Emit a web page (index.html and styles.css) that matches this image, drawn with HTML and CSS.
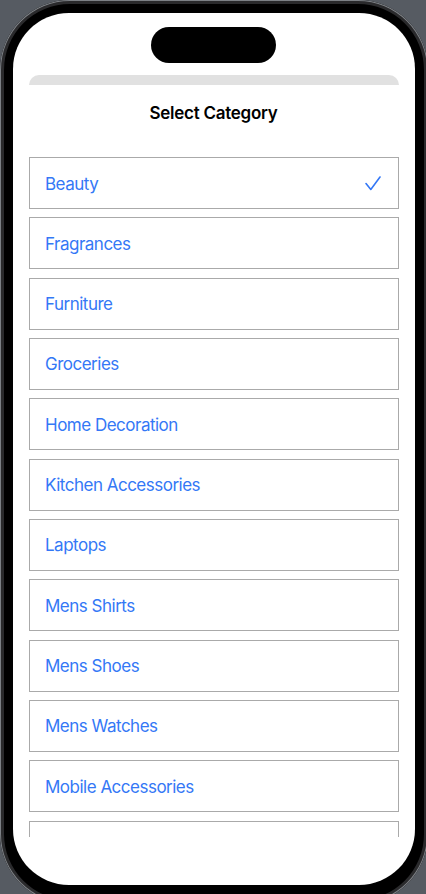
FILE: index.html
```html
<!DOCTYPE html>
<html lang="en">
<head>
<meta charset="utf-8">
<title>Select Category</title>
<link rel="stylesheet" href="styles.css">
</head>
<body>
<div class="phone">
  <div class="screen">
    <div class="island"></div>
    <div class="sheet-edge"></div>
    <h1 class="title">Select Category</h1>
    <div class="list">
      <div class="row selected"><span class="label">Beauty</span>
        <svg class="check" width="16" height="15" viewBox="0 0 16 15"><path d="M1 7.5 L5.8 13.5 L15 1" fill="none" stroke="#3478f6" stroke-width="1.6" stroke-linecap="round" stroke-linejoin="round"/></svg>
      </div>
      <div class="row"><span class="label">Fragrances</span></div>
      <div class="row"><span class="label">Furniture</span></div>
      <div class="row"><span class="label">Groceries</span></div>
      <div class="row"><span class="label">Home Decoration</span></div>
      <div class="row"><span class="label">Kitchen Accessories</span></div>
      <div class="row"><span class="label">Laptops</span></div>
      <div class="row"><span class="label">Mens Shirts</span></div>
      <div class="row"><span class="label">Mens Shoes</span></div>
      <div class="row"><span class="label">Mens Watches</span></div>
      <div class="row"><span class="label">Mobile Accessories</span></div>
      <div class="row"></div>
    </div>
  </div>
</div>
</body>
</html>
```
FILE: styles.css
```css
* { box-sizing: border-box; }
html, body { margin: 0; padding: 0; }
body {
  background: #565b62;
  width: 426px;
  height: 894px;
  overflow: hidden;
  font-family: Inter, "Noto Sans", "Liberation Sans", sans-serif;
}
.phone {
  width: 428px;
  height: 904px;
  border-radius: 70px;
  background: #000;
  box-shadow: inset 0 0 0 1px #7d8186, inset 0 0 0 4px #2a2a2c;
  padding: 13px 13px 9px;
}
.screen {
  width: 402px;
  height: 872px;
  background: #fff;
  border-radius: 56px;
  overflow: hidden;
  display: flex;
  flex-direction: column;
  align-items: center;
}
.island {
  margin: 14px 1px 0 0;
  width: 125px;
  height: 36px;
  border-radius: 18px;
  background: #000;
  flex: none;
}
.sheet-edge {
  margin-top: 12px;
  width: 370px;
  height: 10px;
  background: #e1e1e1;
  border-radius: 10px 10px 0 0;
  flex: none;
}
.title {
  margin: 17px 1px 0 0;
  font-size: 17px;
  line-height: 22px;
  font-weight: 600;
  color: #000;
  letter-spacing: -0.25px;
}
.list {
  margin-top: 33px;
  width: 402px;
  height: 680px;
  overflow: hidden;
  padding: 0 16px;
  display: flex;
  flex-direction: column;
  gap: 8.33px;
  flex: none;
}
.row {
  flex: none;
  height: 52px;
  border: 1px solid #aaaaaa;
  display: flex;
  align-items: center;
  justify-content: space-between;
  padding: 1px 17px 0 15px;
}
.label {
  font-size: 17px;
  color: #3478f6;
  letter-spacing: -0.5px;
}
.check { display: block; }
```
